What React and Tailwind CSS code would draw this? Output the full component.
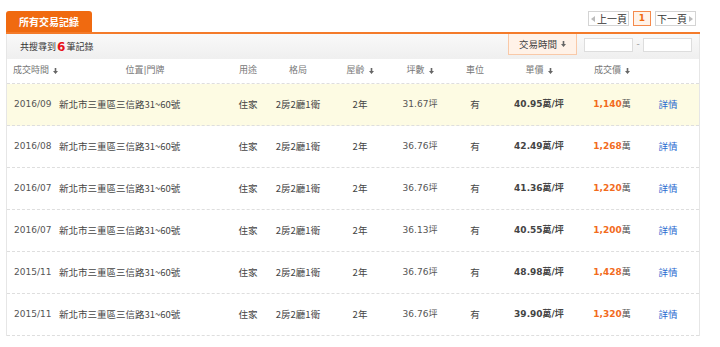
import React from "react";

const rows = [
  { date: "2016/09", area: "31.67", unit: "40.95", total: "1,140", hl: true },
  { date: "2016/08", area: "36.76", unit: "42.49", total: "1,268" },
  { date: "2016/07", area: "36.76", unit: "41.36", total: "1,220" },
  { date: "2016/07", area: "36.13", unit: "40.55", total: "1,200" },
  { date: "2015/11", area: "36.76", unit: "48.98", total: "1,428" },
  { date: "2015/11", area: "36.76", unit: "39.90", total: "1,320" },
];

function Arrow() {
  return (
    <svg width="5" height="6" viewBox="0 0 5 6" className="ml-[4px] inline-block shrink-0">
      <path d="M1.7 0h1.6v3H5L2.5 6 0 3h1.7z" fill="#666" />
    </svg>
  );
}

const GRID =
  "grid grid-cols-[48px_180px_26px_74px_50px_70px_40px_88px_58px_54px] items-center";

export default function App() {
  return (
    <div
      className="w-[720px] h-[347px] bg-white pt-[11px] pl-[6px] text-[9px] text-[#444]"
      style={{ fontFamily: '"DejaVu Sans", "Noto Sans CJK TC", sans-serif' }}
    >
      <div className="w-[694px]">
        {/* top: tab + pagination */}
        <div className="flex justify-between items-start">
          <div className="w-[86px] h-[21px] bg-[#f06a10] rounded-t-[3px] flex items-center justify-center text-white font-bold text-[10px] [font-family:'Noto_Sans_CJK_TC',sans-serif]">
            所有交易記錄
          </div>
          <div className="flex items-center gap-[4px] pr-[4px] text-[10px] text-[#333] [font-family:'Noto_Sans_CJK_TC',sans-serif]">
            <div className="w-[41px] h-[15px] border border-[#d4d4d4] bg-white flex items-center pl-[2px]">
              <svg width="4" height="6" viewBox="0 0 4 6" className="mr-[2px]">
                <path d="M4 0v6L0 3z" fill="#bbb" />
              </svg>
              上一頁
            </div>
            <div className="w-[18px] h-[15px] border border-[#f58a4c] bg-[#fff3ea] flex items-center justify-center text-[#f06a10] font-bold text-[9px] [font-family:'DejaVu_Sans',sans-serif]">
              1
            </div>
            <div className="w-[41px] h-[15px] border border-[#d4d4d4] bg-white flex items-center justify-end pr-[2px]">
              下一頁
              <svg width="4" height="6" viewBox="0 0 4 6" className="ml-[2px]">
                <path d="M0 0v6l4-3z" fill="#bbb" />
              </svg>
            </div>
          </div>
        </div>
        <div className="h-[2px] bg-[#f47b2a]" />

        {/* panel */}
        <div className="border-x border-solid border-[#e6e6e6]">
          {/* toolbar */}
          <div className="h-[25px] bg-gradient-to-b from-[#f9f9f9] to-[#efefef] flex items-start justify-between">
            <div className="h-[25px] flex items-center pl-[13px] text-[#333] [font-family:'Noto_Sans_CJK_TC',sans-serif]">
              共搜尋到
              <span className="text-[#e8141b] font-bold text-[12px] mx-[1px] [font-family:'DejaVu_Sans',sans-serif]">
                6
              </span>
              筆記錄
            </div>
            <div className="flex items-start">
              <div className="w-[69px] h-[21px] bg-[#fff2e8] border border-[#f9c9a8] border-t-0 flex items-center justify-center text-[#444] text-[9.5px] [font-family:'Noto_Sans_CJK_TC',sans-serif]">
                交易時間
                <Arrow />
              </div>
              <div className="flex items-center mt-[4px] ml-[7px] mr-[7px]">
                <div className="w-[49px] h-[14px] bg-white border border-[#dddddd]" />
                <span className="w-[10px] text-center text-[#999]">-</span>
                <div className="w-[49px] h-[14px] bg-white border border-[#dddddd]" />
              </div>
            </div>
          </div>

          {/* column header */}
          <div
            className={`${GRID} h-[25px] bg-white border-b border-dashed border-[#dedede] text-[#777] whitespace-nowrap`}
          >
            <div className="pl-[6px] flex items-center whitespace-nowrap">成交時間<Arrow /></div>
            <div className="text-center">位置|門牌</div>
            <div className="text-center">用途</div>
            <div className="text-center">格局</div>
            <div className="flex items-center justify-center">屋齡<Arrow /></div>
            <div className="flex items-center justify-center">坪數<Arrow /></div>
            <div className="text-center">車位</div>
            <div className="flex items-center justify-center">單價<Arrow /></div>
            <div className="flex items-center justify-center">成交價<Arrow /></div>
            <div />
          </div>

          {rows.map((r, i) => (
            <div
              key={i}
              className={`${GRID} h-[42px] border-b border-dashed border-[#dedede] whitespace-nowrap ${
                r.hl ? "bg-[#fdfbe3]" : "bg-white"
              }`}
            >
              <div className="pl-[7px] text-[#555]">{r.date}</div>
              <div className="pl-[4px] text-[9.5px] text-[#444] [font-family:'Noto_Sans_CJK_TC',sans-serif]">
                新北市三重區三信路31~60號
              </div>
              <div className="text-center text-[9.5px] [font-family:'Noto_Sans_CJK_TC',sans-serif]">
                住家
              </div>
              <div className="text-center text-[9.5px] [font-family:'Noto_Sans_CJK_TC',sans-serif]">
                2房2廳1衛
              </div>
              <div className="text-center text-[9.5px] [font-family:'Noto_Sans_CJK_TC',sans-serif]">
                2年
              </div>
              <div className="text-center text-[#555]">{r.area}坪</div>
              <div className="text-center text-[9.5px] [font-family:'Noto_Sans_CJK_TC',sans-serif]">
                有
              </div>
              <div className="text-center font-bold text-[#444]">
                {r.unit}萬/坪
              </div>
              <div className="text-center text-[#555]">
                <span className="font-bold text-[#f26b1d]">{r.total}</span>萬
              </div>
              <div className="text-center text-[#2a6ad0] text-[9.5px] [font-family:'Noto_Sans_CJK_TC',sans-serif]">
                詳情
              </div>
            </div>
          ))}
        </div>
      </div>
    </div>
  );
}
